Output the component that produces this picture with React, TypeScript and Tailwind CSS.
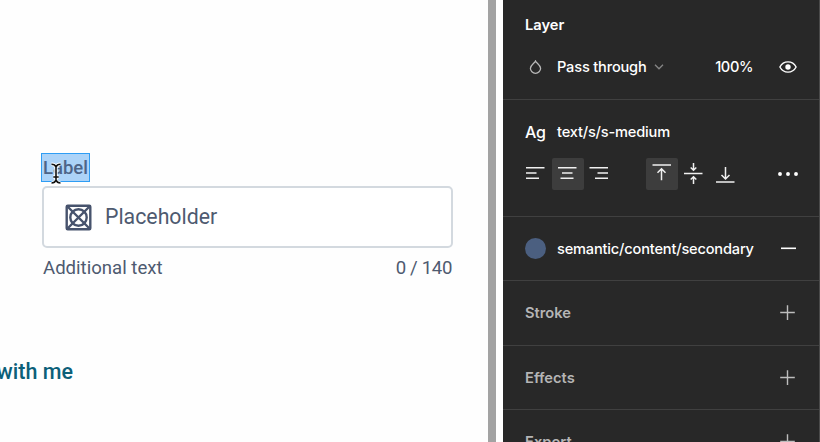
import type { ReactNode } from "react";

function Section({ height, children }: { height: string; children: ReactNode }) {
  return <section className={`shrink-0 border-b border-[#404040] ${height}`}>{children}</section>;
}

function Plus() {
  return (
    <svg className="h-4 w-4" viewBox="0 0 16 16" fill="none" stroke="#bdbdbd" strokeWidth="1.4">
      <path d="M7.5 .3v14.6M.2 7.5h14.6" />
    </svg>
  );
}

function CollapsedSection({ title }: { title: string }) {
  return (
    <div className="flex h-full items-center justify-between pr-[23px] pl-[22px]">
      <span className="pt-px text-[14.7px] font-semibold tracking-normal text-[#b5b5b5]">{title}</span>
      <Plus />
    </div>
  );
}

function Tool({ active = false, d }: { active?: boolean; d: string }) {
  return (
    <span className={`flex h-8 w-8 items-center justify-center rounded-[2px] ${active ? "bg-[#3d3d3d]" : ""}`}>
      <svg className="h-8 w-8" viewBox="0 0 32 32" fill="none" stroke="#f0f0f0" strokeWidth="1.5">
        <path d={d} />
      </svg>
    </span>
  );
}

function Canvas() {
  return (
    <main className="relative h-full w-[488px] shrink-0 overflow-hidden bg-[#fefefe] pt-[153px] font-[Roboto,sans-serif] text-[#4e5a70]">
      <div className="ml-[41px] flex h-[29px] w-[49px] items-center border border-[#2e9df4] bg-[#acd3f8] pt-[2px] pl-px text-[18.5px] font-medium text-[#4d6488]">
        Label
      </div>
      <div className="mt-[4px] ml-[42px] flex h-[62px] w-[411px] items-center rounded-[5px] border-2 border-[#d3d9df] bg-white pl-[21px]">
        <svg className="h-[27px] w-[27px]" viewBox="0 0 27 27" fill="none" stroke="#47536d" strokeWidth="2.4">
          <rect x="1.7" y="1.7" width="23.6" height="23.6" rx="1" />
          <circle cx="13.5" cy="13.5" r="8.2" />
          <path d="M2 2l23 23M25 2L2 25" />
        </svg>
        <span className="ml-[13px] text-[21.3px]">Placeholder</span>
      </div>
      <div className="ml-[43px] flex h-[38px] w-[409px] items-center justify-between pt-[3px] text-[18.6px]">
        <span>Additional text</span>
        <span className="tracking-[-0.35px]">0 / 140</span>
      </div>
      <div className="mt-[71px] flex h-[30px] w-[73px] items-center justify-end text-[21.5px] font-medium whitespace-nowrap text-[#0c6079]">
        with me
      </div>
      <svg className="absolute top-[161px] left-[48px] h-[25px] w-[16px]" viewBox="0 0 16 25" fill="none">
        <path d="M3.5 3.3Q7 3.3 8 6Q9 3.3 12.5 3.3M8 6v13M3.5 22Q7 22 8 19Q9 22 12.5 22M5.3 16h5.4" stroke="#fff" strokeWidth="3.4" />
        <path d="M3.5 3.3Q7 3.3 8 6Q9 3.3 12.5 3.3M8 6v13M3.5 22Q7 22 8 19Q9 22 12.5 22M5.3 16h5.4" stroke="#111" strokeWidth="1.6" />
      </svg>
    </main>
  );
}

export default function App() {
  return (
    <div className="flex h-[442px] w-[820px] overflow-hidden bg-white">
      <Canvas />
      <div className="w-2 shrink-0 bg-[#a3a3a3]" />
      <div className="w-[7px] shrink-0 bg-white" />
      <aside className="flex h-full w-[317px] shrink-0 flex-col overflow-hidden border-r border-[#4a4a4a] bg-[#282828] font-[Inter,sans-serif] text-[14.6px] font-[450] tracking-[-0.18px] text-white">
        <Section height="h-[100px]">
          <div className="flex h-[50px] items-center pl-[22px] text-[14.7px] font-semibold tracking-normal">Layer</div>
          <div className="flex h-[34px] items-center pr-[22px] pl-[26px]">
            <svg className="h-[14px] w-[13px]" viewBox="0 0 13 14" fill="none" stroke="#b8b8b8" strokeWidth="1.3">
              <path d="M6.5 1C5.5 3.2 1.4 5 1.4 8.3a5.1 5 0 0 0 10.2 0C11.6 5 7.5 3.2 6.5 1Z" />
            </svg>
            <span className="ml-[15px] pt-[2px]">Pass through</span>
            <svg className="ml-[7px] h-[6px] w-[10px]" viewBox="0 0 10 6" fill="none" stroke="#868686" strokeWidth="1.3">
              <path d="M1 .8l4 4 4-4" />
            </svg>
            <span className="ml-auto pt-[2px] tracking-[-0.4px]">100%</span>
            <svg className="ml-[26px] h-[12px] w-[18px]" viewBox="0 0 18 12" fill="none">
              <path d="M.9 6C2.6 2.7 5.5.9 9 .9S15.4 2.7 17.1 6C15.4 9.3 12.5 11.1 9 11.1S2.6 9.300.9 6Z" stroke="#fff" strokeWidth="1.4" />
              <circle cx="9" cy="6" r="2.7" fill="#fff" />
            </svg>
          </div>
        </Section>
        <Section height="h-[117px]">
          <div className="flex h-[58px] items-center pt-[6px] pl-[22px]">
            <span className="w-[32px] text-[16px]">Ag</span>
            <span className="pt-px">text/s/s-medium</span>
          </div>
          <div className="flex h-8 items-center pl-[17px]">
            <Tool d="M6 9.700h18.500M6 15h10.500M6 20.300h13" />
            <Tool active d="M6 9.700h18.500M10 15h10.500M8.500 20.300h13" />
            <Tool d="M5.500 9.700h18.500M13.500 15h10.500M11 20.300h13" />
            <span className="w-[30px]" />
            <Tool active d="M6.500 7h18.500M15.500 22.200V10.900M11.500 14.700l4-4 4 4" />
            <Tool d="M6 15.500h18.500M15.500 5v7.300M12.700 9.500l2.800 2.800L18.300 9.500M15.500 26v-7.300M12.700 21.500l2.800-2.800L18.300 21.500" />
            <Tool d="M6 24h18.500M15.500 9v12M11.500 17l4 4 4-4" />
            <svg className="mr-[21px] ml-auto h-[4px] w-[20px]" viewBox="0 0 20 4" fill="#fff">
              <circle cx="2" cy="2" r="1.95" /><circle cx="10" cy="2" r="1.95" /><circle cx="18" cy="2" r="1.95" />
            </svg>
          </div>
        </Section>
        <Section height="h-[64px]">
          <div className="flex h-full items-center pr-[23px] pl-[22px]">
            <span className="h-[21px] w-[21px] rounded-full bg-[#4b5f80]" />
            <span className="ml-[11px] pt-[2px]">semantic/content/secondary</span>
            <svg className="ml-auto h-[3px] w-[15px]" viewBox="0 0 15 3">
              <path d="M0 1.300h15" stroke="#fff" strokeWidth="1.6" />
            </svg>
          </div>
        </Section>
        <Section height="h-[65px]"><CollapsedSection title="Stroke" /></Section>
        <Section height="h-[64px]"><CollapsedSection title="Effects" /></Section>
        <Section height="h-[64px]"><CollapsedSection title="Export" /></Section>
      </aside>
    </div>
  );
}
